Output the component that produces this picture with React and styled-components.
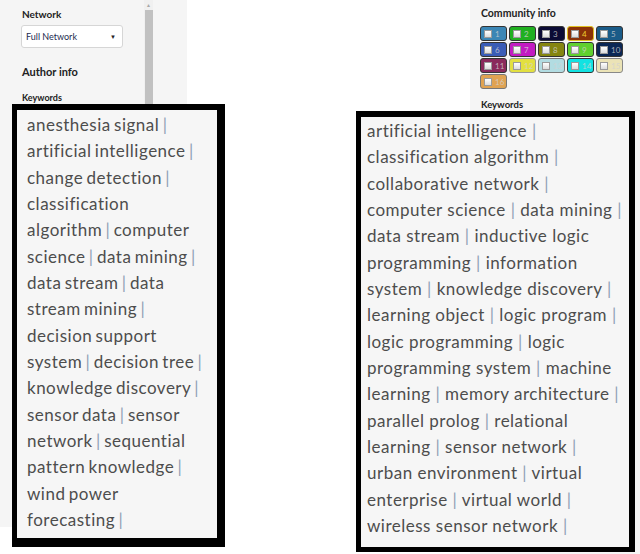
import React from "react";
import styled, { createGlobalStyle } from "styled-components";

const Global = createGlobalStyle`
  html, body { margin: 0; padding: 0; background: #fff; }
  body { font-family: Lato, "Open Sans", sans-serif; }
`;

const Page = styled.div`
  width: 640px;
  height: 554px;
  display: flex;
  justify-content: space-between;
  overflow: hidden;
  background: #fff;
`;

const Panel = styled.div`
  width: ${(p) => p.$w}px;
  height: ${(p) => p.$h}px;
  background: #f5f5f5;
  display: flex;
  flex-direction: column;
`;

const SideTop = styled.div`
  display: flex;
  height: 104px;
`;

const SideContent = styled.div`
  width: 123px;
  padding-left: 21px;
`;

const Scrollbar = styled.div`
  width: 9px;
  height: 104px;
  background: #f0f0f0;
  display: flex;
  flex-direction: column;
  align-items: center;
`;

const ScrollArrow = styled.div`
  height: 10px;
  font-size: 5px;
  line-height: 10px;
  color: #a8a8a8;
`;

const ScrollThumb = styled.div`
  flex: 1;
  width: 8px;
  margin-left: 1px;
  background: #c1c1c1;
`;

const Label = styled.div`
  font-family: Lato, sans-serif;
  font-weight: 700;
  color: #222;
  font-size: ${(p) => p.$size || 10}px;
  line-height: ${(p) => p.$lh || 12}px;
  margin-top: ${(p) => p.$mt || 0}px;
  padding-left: ${(p) => p.$pl || 0}px;
`;

const Select = styled.div`
  margin-top: 5px;
  width: 102px;
  height: 23px;
  box-sizing: border-box;
  border: 1px solid #d6d6d6;
  border-radius: 3px;
  background: #fff;
  display: flex;
  align-items: center;
  justify-content: space-between;
  padding: 0 6px 0 4px;
  font-size: 9px;
  color: #1c2b50;
`;

const Caret = styled.span`
  font-size: 6px;
  color: #222;
`;

const ZoomBox = styled.div`
  margin-left: ${(p) => p.$ml}px;
  width: ${(p) => p.$w}px;
  box-sizing: border-box;
  background: #f6f6f6;
  border-style: solid;
  border-color: #000;
  border-width: ${(p) => p.$bw};
  padding: ${(p) => p.$pad};
  font-family: Lato, sans-serif;
  font-size: 17px;
  letter-spacing: 0.5px;
  word-spacing: ${(p) => p.$ws || 0}px;
  line-height: 26.35px;
  color: #4d4d4d;
  flex-shrink: 0;
`;

const Sep = styled.span`
  color: #8f9fb5;
`;

const Chips = styled.div`
  display: grid;
  grid-template-columns: repeat(5, 27px);
  column-gap: 2px;
  row-gap: 1px;
  margin-top: 7px;
  padding-left: 10px;
`;

const Chip = styled.div`
  height: 15px;
  box-sizing: border-box;
  border: 1px solid ${(p) => p.$border || "#333"};
  border-radius: 3px;
  background: ${(p) => p.$bg};
  display: flex;
  align-items: center;
  gap: 3px;
  padding-left: 3px;
  font-size: 8px;
  color: ${(p) => p.$fg || "rgba(210,210,210,0.8)"};
`;

const Check = styled.span`
  width: 8px;
  height: 8px;
  box-sizing: border-box;
  border: 1px solid #9a9a9a;
  background: linear-gradient(#fff, #dcdcdc);
`;

const leftWords = [
  "anesthesia signal", "artificial intelligence", "change detection",
  "classification algorithm", "computer science", "data mining",
  "data stream", "data stream mining", "decision support system",
  "decision tree", "knowledge discovery", "sensor data", "sensor network",
  "sequential pattern knowledge", "wind power forecasting",
];

const rightWords = [
  "artificial intelligence", "classification algorithm", "collaborative network",
  "computer science", "data mining", "data stream", "inductive logic programming",
  "information system", "knowledge discovery", "learning object", "logic program",
  "logic programming", "logic programming system", "machine learning",
  "memory architecture", "parallel prolog", "relational learning", "sensor network",
  "urban environment", "virtual enterprise", "virtual world", "wireless sensor network",
];

const chips = [
  { bg: "#3b86b5" }, { bg: "#20b020" }, { bg: "#0b0b35" },
  { bg: "#8a3208", border: "#e0c020", fg: "#f0d030" }, { bg: "#1a5b88" },
  { bg: "#3a5cb6" }, { bg: "#c21bc2" }, { bg: "#858510" },
  { bg: "#5fd02e" }, { bg: "#0b2755" }, { bg: "#8a2a5c" },
  { bg: "#e2e040", border: "#999" }, { bg: "#b2dce2", border: "#777" },
  { bg: "#12e2e2" }, { bg: "#ebe3b6", border: "#888" }, { bg: "#e0a352", border: "#777" },
];

function Keywords({ words }) {
  return words.map((w, i) => (
    <React.Fragment key={i}>
      {w} <Sep>|</Sep>{" "}
    </React.Fragment>
  ));
}

export default function App() {
  return (
    <>
      <Global />
      <Page>
        <Panel $w={187} $h={527}>
          <SideTop>
            <SideContent>
              <Label $mt={8} $pl={1}>Network</Label>
              <Select>
                Full Network <Caret>▼</Caret>
              </Select>
              <Label $size={11} $mt={18} $pl={1}>Author info</Label>
              <Label $size={9} $mt={14} $pl={1}>Keywords</Label>
            </SideContent>
            <Scrollbar>
              <ScrollArrow>▲</ScrollArrow>
              <ScrollThumb />
            </Scrollbar>
          </SideTop>
          <ZoomBox $ml={12} $w={213} $ws={-1.5} $bw="6px 8px 9px 5px" $pad="2px 11px 4px 10px">
            <Keywords words={leftWords} />
          </ZoomBox>
        </Panel>

        <Panel $w={170} $h={554}>
          <Label $size={10.5} $mt={7} $pl={11}>Community info</Label>
          <Chips>
            {chips.map((c, i) => (
              <Chip key={i} $bg={c.bg} $border={c.border} $fg={c.fg}>
                <Check />
                {i + 1}
              </Chip>
            ))}
          </Chips>
          <Label $size={9.5} $mt={10} $pl={11}>Keywords</Label>
          <ZoomBox $ml={-114} $w={279} $bw="6px 6px 5px 5px" $pad="1px 4px 7px 6px">
            <Keywords words={rightWords} />
          </ZoomBox>
        </Panel>
      </Page>
    </>
  );
}
